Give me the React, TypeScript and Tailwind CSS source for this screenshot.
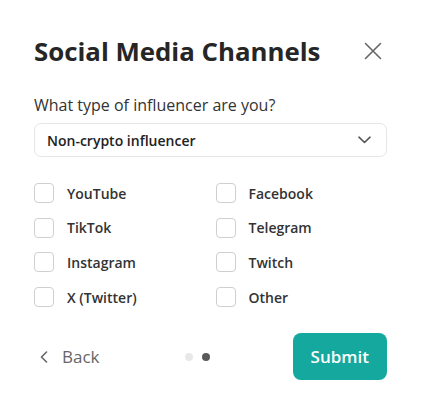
import { useState } from "react";

const channels = [
  "YouTube",
  "Facebook",
  "TikTok",
  "Telegram",
  "Instagram",
  "Twitch",
  "X (Twitter)",
  "Other",
];

export default function App() {
  const [checked, setChecked] = useState<Record<string, boolean>>({});

  return (
    <div className="min-h-[406px] w-full bg-white font-['Open_Sans',sans-serif] text-[#2b2b2b]">
      <div className="flex flex-col px-[34px] pt-[35px]">
        <div className="flex items-center justify-between">
          <h1 className="text-[25.8px] font-bold leading-[32px] text-[#262626]">
            Social Media Channels
          </h1>
          <button
            type="button"
            aria-label="Close"
            className="mr-[2px] flex h-6 w-6 items-center justify-center text-[#666]"
          >
            <svg width="18" height="18" viewBox="0 0 18 18" fill="none">
              <path
                d="M1.5 1.5L16.5 16.5M16.5 1.5L1.5 16.5"
                stroke="currentColor"
                strokeWidth="1.6"
                strokeLinecap="round"
              />
            </svg>
          </button>
        </div>

        <label className="mt-[27px] text-[16px] leading-[22px] text-[#333]">
          What type of influencer are you?
        </label>
        <button
          type="button"
          className="mt-[7px] flex h-[34px] w-full items-center justify-between rounded-[7px] border border-[#e6e6e6] pl-[12px] pr-[15px] text-left"
        >
          <span className="text-[14px] font-semibold text-[#222]">
            Non-crypto influencer
          </span>
          <svg width="13" height="8" viewBox="0 0 13 8" fill="none">
            <path
              d="M1 1.2L6.5 6.5L12 1.2"
              stroke="#555"
              strokeWidth="1.6"
              strokeLinecap="round"
              strokeLinejoin="round"
            />
          </svg>
        </button>

        <div className="mt-[26px] grid grid-cols-2 gap-x-[10px] gap-y-[14.7px]">
          {channels.map(name => (
            <label
              key={name}
              className="flex h-5 cursor-pointer items-center gap-[13px]"
            >
              <input
                type="checkbox"
                checked={!!checked[name]}
                onChange={e =>
                  setChecked(c => ({ ...c, [name]: e.target.checked }))
                }
                className="h-5 w-5 appearance-none rounded-[4px] border border-[#cfcfcf] bg-white checked:border-[#14a89e] checked:bg-[#14a89e]"
              />
              <span className="text-[14px] font-semibold text-[#333]">
                {name}
              </span>
            </label>
          ))}
        </div>

        <div className="mt-[26px] flex items-center">
          <button
            type="button"
            className="flex items-center gap-[14px] pl-[6px] text-[#666]"
          >
            <svg width="8" height="12" viewBox="0 0 8 12" fill="none">
              <path
                d="M6.5 1L1.5 6L6.5 11"
                stroke="currentColor"
                strokeWidth="1.6"
                strokeLinecap="round"
                strokeLinejoin="round"
              />
            </svg>
            <span className="text-[17px] leading-6">Back</span>
          </button>
          <div className="ml-[85px] flex items-center gap-[9px]">
            <span className="h-2 w-2 rounded-full bg-[#e8e8e8]" />
            <span className="h-2 w-2 rounded-full bg-[#5a5a5a]" />
          </div>
          <button
            type="button"
            className="ml-auto h-[47px] rounded-[8px] bg-[#14a89e] px-[18px] text-[17px] font-semibold text-white"
          >
            Submit
          </button>
        </div>
      </div>
    </div>
  );
}
